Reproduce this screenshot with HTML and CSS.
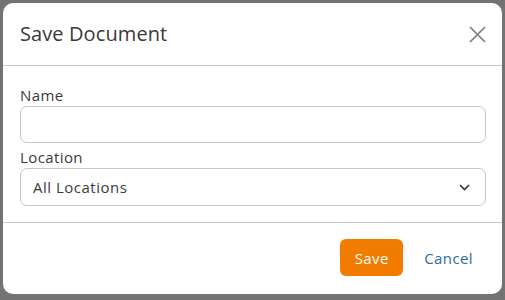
FILE: index.html
```html
<!DOCTYPE html>
<html>
<head>
<meta charset="utf-8">
<link rel="stylesheet" href="styles.css">
</head>
<body>
<div class="modal">
  <div class="modal-header">
    <h1 class="title">Save Document</h1>
    <button class="close" aria-label="Close">
      <svg width="17" height="17" viewBox="0 0 17 17"><path d="M1 1L16 16M16 1L1 16" stroke="#7a7a7a" stroke-width="1.6" fill="none"/></svg>
    </button>
  </div>
  <div class="modal-body">
    <label class="label">Name</label>
    <div class="input"></div>
    <label class="label">Location</label>
    <div class="input select">
      <span>All Locations</span>
      <svg width="11" height="7" viewBox="0 0 11 7"><path d="M1 1L5.5 5.5L10 1" stroke="#333" stroke-width="1.6" fill="none"/></svg>
    </div>
  </div>
  <div class="modal-footer">
    <button class="btn-save">Save</button>
    <button class="btn-cancel">Cancel</button>
  </div>
</div>
</body>
</html>
```
FILE: styles.css
```css
html, body {
  margin: 0;
  padding: 0;
  background: #737373;
  width: 505px;
  height: 300px;
  overflow: hidden;
}
.modal {
  margin: 3px 0 0 3px;
  width: 499px;
  height: 291px;
  background: #fff;
  border-radius: 10px;
  font-family: "Open Sans", Lato, sans-serif;
  color: #3a3a3a;
  display: flex;
  flex-direction: column;
  box-sizing: border-box;
}
.modal-header {
  height: 62px;
  border-bottom: 1px solid #c9c9c9;
  display: flex;
  align-items: center;
  justify-content: space-between;
  padding: 0 16px 0 17px;
  box-sizing: content-box;
}
.title {
  margin: 0;
  font-size: 20px;
  font-weight: 400;
  color: #3a3a3a;
  line-height: 24px;
  letter-spacing: 0.1px;
}
.close {
  border: 0;
  background: none;
  padding: 0;
  width: 17px;
  height: 17px;
  display: flex;
  margin-top: 1px;
}
.modal-body {
  padding: 19px 16px 16px 17px;
  display: flex;
  flex-direction: column;
}
.label {
  font-size: 15px;
  line-height: 20px;
  height: 21px;
  color: #3a3a3a;
  letter-spacing: 0.4px;
}
.input {
  height: 35px;
  border: 1px solid #c7c7c7;
  border-radius: 7px;
  margin-bottom: 4px;
}
.select {
  margin-bottom: 0;
  display: flex;
  align-items: center;
  justify-content: space-between;
  padding: 0 15px 0 12px;
  font-size: 15px;
  letter-spacing: 0.5px;
  height: 36px;
}
.modal-footer {
  flex: 1;
  border-top: 1px solid #c9c9c9;
  display: flex;
  justify-content: flex-end;
  align-items: flex-start;
  padding: 16px 20px 0 0;
}
.btn-save {
  width: 63px;
  height: 37px;
  background: #f17c00;
  color: #fff;
  border: 0;
  border-radius: 6px;
  font-family: "Open Sans", Lato, sans-serif;
  font-size: 15px;
  letter-spacing: 0.4px;
  padding: 0;
}
.btn-cancel {
  background: none;
  border: 0;
  color: #2b6ca3;
  font-family: "Open Sans", Lato, sans-serif;
  font-size: 15px;
  letter-spacing: 0.4px;
  height: 37px;
  margin-left: 12px;
  padding: 0 9px;
}
```
